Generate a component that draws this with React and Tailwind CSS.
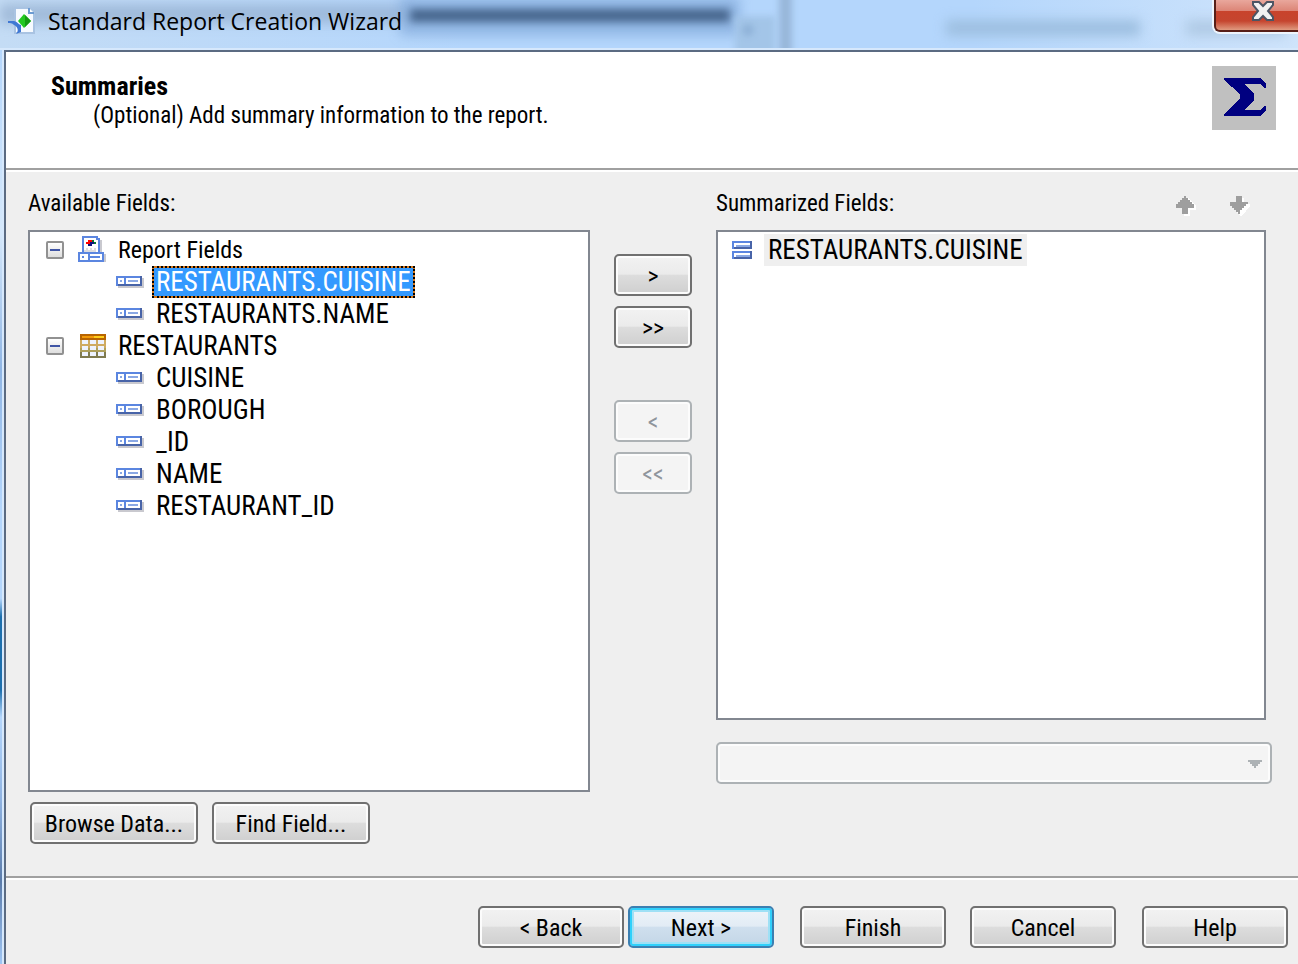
import { useState } from 'react';
import clsx from 'clsx';

const tree = [
  { label: 'Report Fields', icon: 'report', fields: ['RESTAURANTS.CUISINE', 'RESTAURANTS.NAME'] },
  { label: 'RESTAURANTS', icon: 'table', fields: ['CUISINE', 'BOROUGH', '_ID', 'NAME', 'RESTAURANT_ID'] },
];

const FieldIcon = () => (
  <svg width="28" height="12" viewBox="0 0 14 6" shapeRendering="crispEdges" className="shrink-0">
    <path d="M1 1h13v5H1z" fill="#c9c9cf" />
    <path d="M0 0h13v5H0z" fill="#4864a8" />
    <path d="M0 0h12v1H1v4H0z" fill="#5b86e0" />
    <path d="M1 1h3v3H1zM5 1h7v3H5z" fill="#fff" />
    <path d="M4 1h1v3H4z" fill="#5b86e0" />
    <path d="M2 2h1v1H2zM6 2h5v1H6z" fill="#8aa8e4" />
  </svg>
);

const ReportIcon = () => (
  <svg width="28" height="28" viewBox="0 0 14 14" shapeRendering="crispEdges" className="shrink-0">
    <path d="M11 2h1v7h-1zM1 13h13V9h-1v4H1z" fill="#c9c9cf" />
    <path d="M2 0h8v1h1v8H2z" fill="#5b86e0" />
    <path d="M3 1h6v1h1v6H3z" fill="#fff" />
    <path d="M4 6h1v1H4zM6 6h1v1H6zM8 6h1v1H8zM3 7h6v1H3z" fill="#dcdce0" />
    <path d="M5 2h2v1h-1v1H4V3h1z" fill="#f00" />
    <path d="M7 2h1v1h1v1H8V3H7z" fill="#087830" />
    <path d="M6 3h2v1H7v1H5V4h1z" fill="#101080" />
    <path d="M0 8h13v5H0z" fill="#5b86e0" />
    <path d="M1 9h4v3H1zM6 9h6v3H6z" fill="#fff" />
    <path d="M2 10h1v1H2zM6 10h5v1H6z" fill="#5b86e0" />
  </svg>
);

const TableIcon = () => (
  <svg width="28" height="24" viewBox="0 0 14 12" shapeRendering="crispEdges" className="shrink-0">
    <path d="M1 3h13v9H1z" fill="#7f7b50" />
    <path d="M1 3h13v4H1z" fill="#cfab62" />
    <path d="M1 7h13v2H1z" fill="#aea05c" />
    <path d="M2 3h3v2H2zM6 3h3v2H6zM10 3h3v2h-3zM2 6h3v2H2zM6 6h3v2H6zM10 6h3v2h-3zM2 9h3v2H2zM6 9h3v2H6zM10 9h3v2h-3z" fill="#eef3ff" />
    <path d="M1 0h13v3H1z" fill="#b86400" />
    <path d="M2 1h6v1H2z" fill="#f39a08" />
    <path d="M8 1h5v1H8z" fill="#ffcf1a" />
  </svg>
);

const SummaryIcon = () => (
  <svg width="20" height="18" viewBox="0 0 10 9" shapeRendering="crispEdges" className="shrink-0">
    <path d="M0 0h10v4H0zM0 5h10v4H0z" fill="#4864a8" />
    <path d="M0 0h9v1H1v3H0zM0 5h9v1H1v3H0z" fill="#5b86e0" />
    <path d="M1 1h8v2H1zM1 6h8v2H1z" fill="#fff" />
    <path d="M2 2h7v1H2zM2 7h7v1H2z" fill="#8aa8e4" />
  </svg>
);

const SigmaIcon = () => (
  <svg width="64" height="64" viewBox="0 0 32 32" shapeRendering="crispEdges" className="shrink-0 bg-[#c0c0c0]">
    <path
      d="M6 6h18l3 3v2h-1l-2-2h-8l5 5v3l-5 5h8l2-2h1v2l-3 3H6v-1l8-8v-2L6 7z"
      fill="#000080"
    />
  </svg>
);

const WizardIcon = () => (
  <svg width="28" height="30" viewBox="0 0 28 30" className="shrink-0">
    <path d="M7 2h14l5 5v20H7z" fill="#f6faff" stroke="#a9c3e2" strokeWidth="2" />
    <path d="M21 2v5h5" fill="#fff" stroke="#6d9bd2" strokeWidth="2" />
    <path d="M16 8l7 7-7 7-6-7z" fill="#22c822" />
    <path d="M17 9l6 6-6 6z" fill="#139a13" />
    <path d="M0 15h6c4 1 5 4 7 4v7l-5 2c3-3 2-7-2-9-2-2-4-2-6-2z" fill="#3f78d4" />
  </svg>
);

const ArrowIcon = ({ down }) => (
  <svg width="20" height="20" viewBox="0 0 10 10" shapeRendering="crispEdges">
    {down ? (
      <>
        <path d="M4 1h3v3h3v1l-4 5H5L1 5V4h3z" fill="#fff" />
        <path d="M3 0h3v3h3v1H8v1H7v1H6v1H5v2H4V8H3V7H2V6H1V5H0V3h3z" fill="#9e9e9e" />
      </>
    ) : (
      <>
        <path d="M5 1h1l4 4v2H7v3H4V6z" fill="#fff" />
        <path d="M4 0h1v1h1v1h1v1h1v1h1v2H6v3H3V6H0V4h1V3h1V2h1V1h1z" fill="#9e9e9e" />
      </>
    )}
  </svg>
);

const WizardButton = ({ children, className, primary, disabled, ...props }) => (
  <button
    type="button"
    disabled={disabled}
    className={clsx(
      'h-[42px] shrink-0 rounded-[5px] border-2 pt-[2px] text-center text-[24px]',
      primary &&
        'border-[#3c7fb1] bg-[linear-gradient(#eef4f9_0%,#e2ecf5_48%,#cfdfee_50%,#c3d6e6_100%)] shadow-[inset_0_0_0_2px_#2fd0fb,inset_0_0_0_4px_#9fe0f5]',
      disabled && 'border-[#adb2b5] bg-[#f4f4f4] text-[#8f959c] shadow-[inset_0_0_0_2px_#fcfcfc]',
      !primary &&
        !disabled &&
        'border-[#707070] bg-[linear-gradient(#f2f2f2_0%,#ebebeb_48%,#dddddd_50%,#cfcfcf_100%)] shadow-[inset_0_0_0_2px_#fcfcfc]',
      className
    )}
    {...props}
  >
    {children}
  </button>
);

const TitleBar = () => (
  <header className="relative flex h-[50px] items-start overflow-hidden border-b-2 border-[#d6e8fc] bg-[linear-gradient(90deg,#c4dcf5_0%,#b4d6fc_36%,#b4d6fc_75%,#cfe4fb_100%)] pl-2">
    {/* windows showing through the glass */}
    <div className="absolute top-1 left-0 h-5 w-[410px] bg-[#8ba6c8] opacity-60 blur-[6px]" />
    <div className="absolute -top-1 left-[400px] h-10 w-[340px] bg-[#84abdc] opacity-70 blur-[6px]" />
    <div className="absolute top-[9px] left-[410px] h-[13px] w-[320px] bg-[#45648b] blur-[4px]" />
    <div className="absolute top-4 left-[735px] h-10 w-10 bg-[#a3c5e8] blur-[3px]" />
    <div className="absolute top-6 left-[742px] h-3 w-3 rounded-full bg-[#8fb2d8] blur-[3px]" />
    <div className="absolute -top-2 left-[779px] h-16 w-[13px] bg-[#98b7da] blur-[3px]" />
    <div className="absolute top-5 left-[946px] h-4 w-[194px] bg-[#9dbfe0] blur-[6px]" />
    <div className="absolute top-5 left-[1186px] h-4 w-[100px] bg-[#b0cae5] blur-[6px]" />
    <div className="relative flex w-full items-center">
      <div className="flex h-[42px] items-center gap-3">
        <WizardIcon />
        <h1 className="font-['Open_Sans','Noto_Sans',sans-serif] text-[23px] leading-8">Standard Report Creation Wizard</h1>
      </div>
      <button
        type="button"
        aria-label="Close"
        className="ml-auto flex h-8 w-[84px] items-center justify-center self-start rounded-bl-[6px] border-b-2 border-l-2 border-[#571f18] bg-[linear-gradient(#e9a79c_0%,#dc8577_36%,#c8432c_38%,#c5452f_70%,#e09a80_100%)] pb-2 pl-3 shadow-[0_0_0_2px_#eef5fd]"
      >
        <svg width="24" height="22" viewBox="0 0 24 22">
          <path
            d="M2 2h6l4 4 4-4h6v3l-5 6 5 6v3h-6l-4-4-4 4H2v-3l5-6-5-6z"
            fill="#f1f1f1"
            stroke="#4c5564"
            strokeWidth="2"
          />
        </svg>
      </button>
    </div>
  </header>
);

const FieldTree = () => {
  const [selected, setSelected] = useState('RESTAURANTS.CUISINE');
  const [closed, setClosed] = useState({});

  return (
    <ul aria-labelledby="available" className="flex-1 border-2 border-[#828790] bg-white pt-[2px] text-[27px]">
      {tree.map((group) => (
        <li key={group.label}>
          <div className="flex h-8 items-center pl-4">
            <button
              type="button"
              aria-label={`Toggle ${group.label}`}
              onClick={() => setClosed({ ...closed, [group.label]: !closed[group.label] })}
              className="mr-3.5 flex h-[18px] w-[18px] items-center justify-center rounded-[2px] border-2 border-[#919191] bg-linear-to-b from-white to-[#dedede]"
            >
              <span className="h-[2px] w-[10px] bg-[#4055a5]" />
            </button>
            {group.icon === 'report' ? <ReportIcon /> : <TableIcon />}
            <span className={clsx('ml-3', group.icon === 'report' && 'text-[24px]')}>{group.label}</span>
          </div>
          {!closed[group.label] && (
            <ul>
              {group.fields.map((field) => (
                <li key={field} className="flex h-8 items-center gap-2 pl-[86px]">
                  <FieldIcon />
                  <button
                    type="button"
                    onClick={() => setSelected(field)}
                    className={clsx(
                      'h-8 border-2',
                      selected === field ? 'border-dotted border-black bg-[#d87a1c] text-white' : 'border-transparent'
                    )}
                  >
                    <span className={clsx('flex h-7 items-center px-[2px]', selected === field && 'bg-[#3399ff]')}>
                      {field}
                    </span>
                  </button>
                </li>
              ))}
            </ul>
          )}
        </li>
      ))}
    </ul>
  );
};

const App = () => {
  return (
    <div className="flex min-h-screen flex-col overflow-hidden bg-[#efefef] font-['Roboto_Condensed','Roboto',sans-serif] text-[23px] leading-8 text-black">
      <TitleBar />

      <div className="flex flex-1">
        {/* Glass edge of the window */}
        <div className="w-1 border-r-2 border-[#d6e8fc] bg-[linear-gradient(#b4d6fc_0%,#d5e8fb_20%,#8fb5e4_35%,#b4d6fc_50%,#b4d6fc_60%,#1c6fae_62%,#1c6fae_70%,#b4d6fc_73%,#8fb3e2_82%,#5b7cab_91%,#a0c6f4_100%)]" />

        <div className="flex flex-1 flex-col border-t-2 border-l-2 border-[#5b6b82]">
          <section className="flex h-[118px] items-start justify-between border-b-2 border-[#a0a0a0] bg-white pt-3.5 pr-[22px] pl-[45px]">
            <div>
              <h2 className="pt-1 text-[26px] font-bold">Summaries</h2>
              <p className="pl-[42px] leading-7">(Optional) Add summary information to the report.</p>
            </div>
            <SigmaIcon />
          </section>

          <main className="flex flex-1 gap-6 border-t-2 border-white pt-4 pr-[26px] pl-[22px]">
            <section className="flex flex-[562] flex-col pb-8">
              <h3 id="available" className="mb-2.5">Available Fields:</h3>
              <FieldTree />
              <div className="mt-2.5 flex gap-3.5 pl-[2px]">
                <WizardButton className="w-[168px]">Browse Data...</WizardButton>
                <WizardButton className="w-[158px]">Find Field...</WizardButton>
              </div>
            </section>

            <div className="flex w-[78px] flex-col gap-2.5 pt-[66px]">
              <WizardButton>&gt;</WizardButton>
              <WizardButton>&gt;&gt;</WizardButton>
              <WizardButton disabled className="mt-[42px]">&lt;</WizardButton>
              <WizardButton disabled>&lt;&lt;</WizardButton>
            </div>

            <section className="flex flex-[556] flex-col pb-[92px]">
              <div className="mb-2.5 flex items-center">
                <h3 id="summarized">Summarized Fields:</h3>
                <div className="ml-auto flex gap-[34px] pt-1 pr-[22px]">
                  <button type="button" aria-label="Move up"><ArrowIcon /></button>
                  <button type="button" aria-label="Move down"><ArrowIcon down /></button>
                </div>
              </div>
              <ul aria-labelledby="summarized" className="mr-1.5 flex-1 border-2 border-[#828790] bg-white pt-[2px] text-[27px]">
                <li className="flex items-center gap-3 pl-3.5">
                  <SummaryIcon />
                  <span className="h-8 bg-[#efefef] px-1">RESTAURANTS.CUISINE</span>
                </li>
              </ul>
              <div className="relative mt-[22px]">
                <select
                  disabled
                  aria-label="Summary type"
                  className="block h-[42px] w-full appearance-none rounded-[5px] border-2 border-[#adb2b5] bg-[#f4f4f4] shadow-[inset_0_0_0_2px_#fcfcfc]"
                />
                <svg
                  width="14"
                  height="8"
                  viewBox="0 0 7 4"
                  shapeRendering="crispEdges"
                  className="pointer-events-none absolute top-[18px] right-[10px]"
                >
                  <path d="M0 0h7v1H6v1H5v1H4v1H3V3H2V2H1V1H0z" fill="#adb2b5" />
                </svg>
              </div>
            </section>
          </main>

          <footer className="border-t-2 border-[#a0a0a0]">
            <div className="flex justify-end border-t-2 border-white pt-[26px] pr-2.5 pb-4">
              <WizardButton className="w-[146px]">&lt; Back</WizardButton>
              <WizardButton primary className="ml-1 w-[146px]">Next &gt;</WizardButton>
              <WizardButton className="ml-[26px] w-[146px]">Finish</WizardButton>
              <WizardButton className="ml-6 w-[146px]">Cancel</WizardButton>
              <WizardButton className="ml-[26px] w-[146px]">Help</WizardButton>
            </div>
          </footer>
        </div>
      </div>
    </div>
  );
};

export default App;
